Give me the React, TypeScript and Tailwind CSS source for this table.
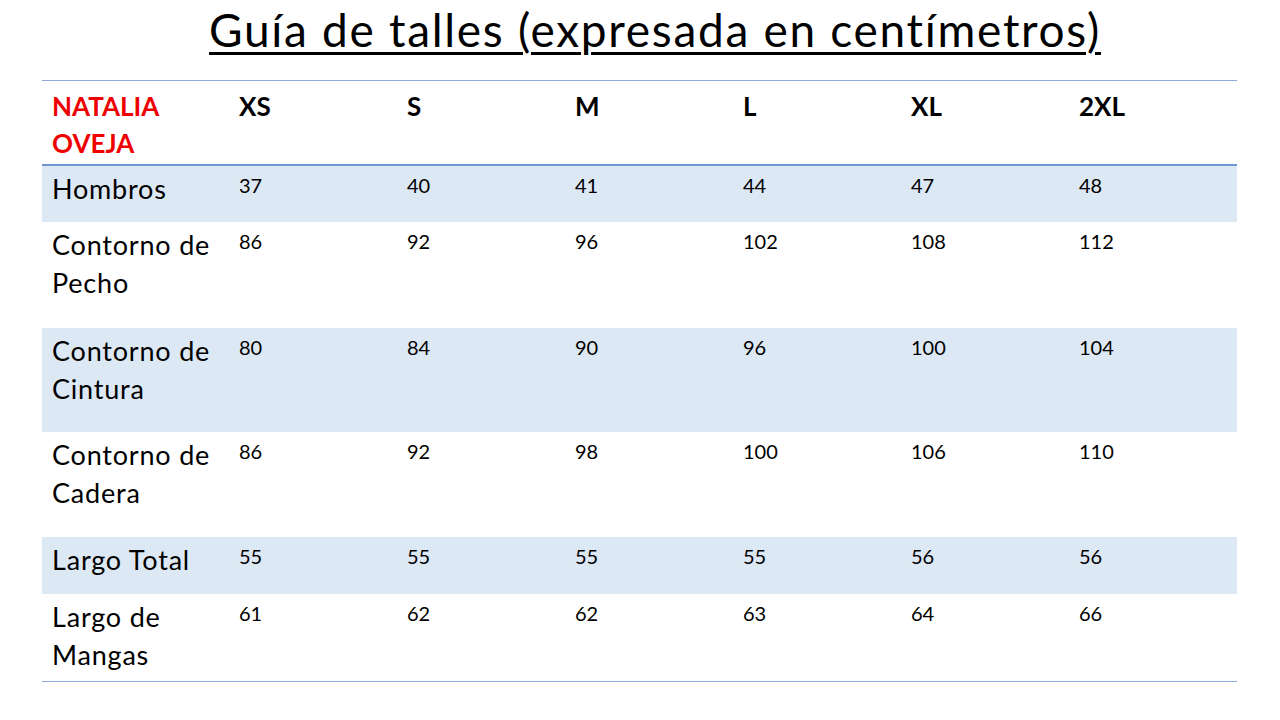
const sizes = ['XS', 'S', 'M', 'L', 'XL', '2XL'];

const rows = [
  { label: ['Hombros'], values: [37, 40, 41, 44, 47, 48], h: 'h-[56px]', shaded: true },
  { label: ['Contorno de', 'Pecho'], values: [86, 92, 96, 102, 108, 112], h: 'h-[106px]', shaded: false },
  { label: ['Contorno de', 'Cintura'], values: [80, 84, 90, 96, 100, 104], h: 'h-[104px]', shaded: true },
  { label: ['Contorno de', 'Cadera'], values: [86, 92, 98, 100, 106, 110], h: 'h-[105px]', shaded: false },
  { label: ['Largo Total'], values: [55, 55, 55, 55, 56, 56], h: 'h-[57px]', shaded: true },
  { label: ['Largo de', 'Mangas'], values: [61, 62, 62, 63, 64, 66], h: 'h-[87px]', shaded: false },
];

export default function App() {
  return (
    <div className="w-[1280px] h-[720px] bg-white text-black overflow-hidden" style={{ fontFamily: 'Lato, "Open Sans", sans-serif' }}>
      {/* Title */}
      <div className="h-[80px] pl-[30px] text-center">
        <h1 className="inline-block pt-[3px] text-[46px] leading-[54px] tracking-[1.7px] underline underline-offset-[5px] decoration-[3px]">
          Guía de talles (expresada en centímetros)
        </h1>
      </div>

      {/* Table */}
      <div className="mx-[42px] w-[1195px] border-t border-[#8eaadb] border-b">
        <div className="grid grid-cols-[187px_repeat(6,168px)] h-[85px] border-b-2 border-[#6f98d0]">
          <div className="pl-[10px] pt-[7px] text-[26px] leading-[37px] font-bold text-[#ee0000]">
            NATALIA
            <br />
            OVEJA
          </div>
          {sizes.map((s) => (
            <div key={s} className="pl-[10px] pt-[7px] text-[26px] leading-[37px] font-bold">
              {s}
            </div>
          ))}
        </div>

        {rows.map((r) => (
          <div
            key={r.label.join(' ')}
            className={`grid grid-cols-[187px_repeat(6,168px)] ${r.h} ${r.shaded ? 'bg-[#dde8f5]' : 'bg-white'}`}
          >
            <div className="pl-[10px] pt-[4px] text-[27px] leading-[38px] tracking-[0.8px] whitespace-nowrap">
              {r.label.map((l) => (
                <div key={l}>{l}</div>
              ))}
            </div>
            {r.values.map((v, i) => (
              <div key={i} className="pl-[10px] pt-[7px] text-[20px] leading-[24px]">
                {v}
              </div>
            ))}
          </div>
        ))}
      </div>
    </div>
  );
}
